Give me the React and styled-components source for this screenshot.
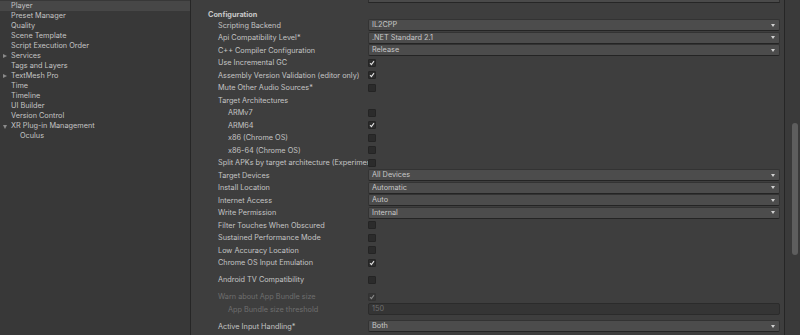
import React from "react";
import styled, { createGlobalStyle } from "styled-components";

const Global = createGlobalStyle`
  html, body {
    margin: 0;
    padding: 0;
    background: #383838;
  }
  body {
    font-family: Inter, "Liberation Sans", sans-serif;
    font-size: 7.3px;
    color: #c4c4c4;
  }
`;

const Window = styled.div`
  display: flex;
  width: 800px;
  height: 335px;
  overflow: hidden;
  background: #3e3e3e;
`;

const Sidebar = styled.div`
  width: 190px;
  flex: none;
  background: #383838;
  border-right: 1px solid #262626;
  overflow: hidden;
`;

const TreeList = styled.div`
  padding-top: 1px;
  display: flex;
  flex-direction: column;
`;

const TreeItem = styled.div`
  height: 10px;
  line-height: 10px;
  display: flex;
  align-items: center;
  padding-left: ${(p) => 11 + p.$depth * 9}px;
  background: ${(p) => (p.$selected ? "#474747" : "transparent")};
  white-space: nowrap;
  position: relative;
`;

const Fold = styled.span`
  position: absolute;
  left: ${(p) => 3 + p.$depth * 9}px;
  top: 3px;
  width: 0;
  height: 0;
  ${(p) =>
    p.$open
      ? `border-left: 2.5px solid transparent; border-right: 2.5px solid transparent; border-top: 4px solid #8a8a8a; top: 4px;`
      : `border-top: 2.5px solid transparent; border-bottom: 2.5px solid transparent; border-left: 4px solid #8a8a8a;`}
`;

const Inspector = styled.div`
  flex: 1;
  padding-left: 17px;
  padding-right: 4px;
  overflow: hidden;
  display: flex;
  flex-direction: column;
`;

const Stub = styled.div`
  margin-left: 160px;
  height: 3px;
  background: #4a4a4a;
  border: 1px solid #2f2f2f;
  border-top: none;
  border-bottom-color: #262626;
  margin-top: -1px;
  margin-bottom: 7px;
`;

const Header = styled.div`
  height: 9px;
  line-height: 9px;
  font-weight: 700;
  color: #c8c8c8;
`;

const Row = styled.div`
  height: 12.5px;
  display: flex;
  align-items: center;
  margin-top: ${(p) => (p.$gap ? "4.5px" : "0")};
`;

const Label = styled.div`
  width: ${(p) => 150 - p.$indent * 10}px;
  padding-left: ${(p) => 10 + p.$indent * 10}px;
  flex: none;
  white-space: nowrap;
  overflow: hidden;
  color: ${(p) => (p.$disabled ? "#6e6e6e" : "#c4c4c4")};
`;

const Dropdown = styled.div`
  flex: 1;
  height: 10px;
  line-height: 10px;
  background: #4c4c4c;
  border: 1px solid #333333;
  border-bottom-color: #242424;
  border-radius: 2px;
  padding-left: 3px;
  display: flex;
  align-items: center;
  justify-content: space-between;
  color: #c8c8c8;
`;

const Arrow = styled.span`
  width: 0;
  height: 0;
  margin-right: 4px;
  border-left: 2.5px solid transparent;
  border-right: 2.5px solid transparent;
  border-top: 3px solid #d0d0d0;
`;

const TextField = styled.div`
  flex: 1;
  height: 10px;
  line-height: 10px;
  background: #353535;
  border: 1px solid #2b2b2b;
  border-radius: 2px;
  padding-left: 3px;
  color: #6e6e6e;
`;

const Box = styled.div`
  width: 8px;
  height: 8px;
  background: #2b2b2b;
  border: 1px solid #242424;
  border-radius: 1px;
  box-sizing: border-box;
  display: flex;
  align-items: center;
  justify-content: center;
  opacity: ${(p) => (p.$disabled ? 0.45 : 1)};
`;

const Scrollbar = styled.div`
  width: 16px;
  flex: none;
  background: #3a3a3a;
  border-left: 1px solid #262626;
  display: flex;
  flex-direction: column;
  align-items: center;
  padding-top: 123px;
  box-sizing: border-box;
`;

const Thumb = styled.div`
  width: 6px;
  height: 132px;
  border-radius: 3px;
  background: #5e5e5e;
  margin-left: 4px;
`;

const Check = () => (
  <svg width="6" height="6" viewBox="0 0 6 6">
    <path d="M1 3.2 L2.4 4.6 L5 1.2" stroke="#e0e0e0" strokeWidth="1.1" fill="none" />
  </svg>
);

const tree = [
  { name: "Player", selected: true },
  { name: "Preset Manager" },
  { name: "Quality" },
  { name: "Scene Template" },
  { name: "Script Execution Order" },
  { name: "Services", fold: "closed" },
  { name: "Tags and Layers" },
  { name: "TextMesh Pro", fold: "closed" },
  { name: "Time" },
  { name: "Timeline" },
  { name: "UI Builder" },
  { name: "Version Control" },
  { name: "XR Plug-in Management", fold: "open" },
  { name: "Oculus", depth: 1 },
];

const rows = [
  { label: "Scripting Backend", type: "dropdown", value: "IL2CPP" },
  { label: "Api Compatibility Level*", type: "dropdown", value: ".NET Standard 2.1" },
  { label: "C++ Compiler Configuration", type: "dropdown", value: "Release" },
  { label: "Use Incremental GC", type: "check", value: true },
  { label: "Assembly Version Validation (editor only)", type: "check", value: true },
  { label: "Mute Other Audio Sources*", type: "check", value: false },
  { label: "Target Architectures", type: "none" },
  { label: "ARMv7", type: "check", value: false, indent: 1 },
  { label: "ARM64", type: "check", value: true, indent: 1 },
  { label: "x86 (Chrome OS)", type: "check", value: false, indent: 1 },
  { label: "x86-64 (Chrome OS)", type: "check", value: false, indent: 1 },
  { label: "Split APKs by target architecture (Experimental)", type: "check", value: false },
  { label: "Target Devices", type: "dropdown", value: "All Devices" },
  { label: "Install Location", type: "dropdown", value: "Automatic" },
  { label: "Internet Access", type: "dropdown", value: "Auto" },
  { label: "Write Permission", type: "dropdown", value: "Internal" },
  { label: "Filter Touches When Obscured", type: "check", value: false },
  { label: "Sustained Performance Mode", type: "check", value: false },
  { label: "Low Accuracy Location", type: "check", value: false },
  { label: "Chrome OS Input Emulation", type: "check", value: true },
  { label: "Android TV Compatibility", type: "check", value: false, gap: true },
  { label: "Warn about App Bundle size", type: "check", value: true, gap: true, disabled: true },
  { label: "App Bundle size threshold", type: "text", value: "150", indent: 1, disabled: true },
  { label: "Active Input Handling*", type: "dropdown", value: "Both", gap: true },
];

function Field({ row }) {
  if (row.type === "dropdown")
    return (
      <Dropdown>
        {row.value}
        <Arrow />
      </Dropdown>
    );
  if (row.type === "check")
    return <Box $disabled={row.disabled}>{row.value && <Check />}</Box>;
  if (row.type === "text") return <TextField>{row.value}</TextField>;
  return null;
}

export default function App() {
  return (
    <>
      <Global />
      <Window>
        <Sidebar>
          <TreeList>
            {tree.map((t) => (
              <TreeItem key={t.name} $selected={t.selected} $depth={t.depth || 0}>
                {t.fold && <Fold $open={t.fold === "open"} $depth={t.depth || 0} />}
                {t.name}
              </TreeItem>
            ))}
          </TreeList>
        </Sidebar>
        <Inspector>
          <Stub />
          <Header>Configuration</Header>
          {rows.map((r) => (
            <Row key={r.label} $gap={r.gap}>
              <Label $indent={r.indent || 0} $disabled={r.disabled}>
                {r.label}
              </Label>
              <Field row={r} />
            </Row>
          ))}
        </Inspector>
        <Scrollbar>
          <Thumb />
        </Scrollbar>
      </Window>
    </>
  );
}
